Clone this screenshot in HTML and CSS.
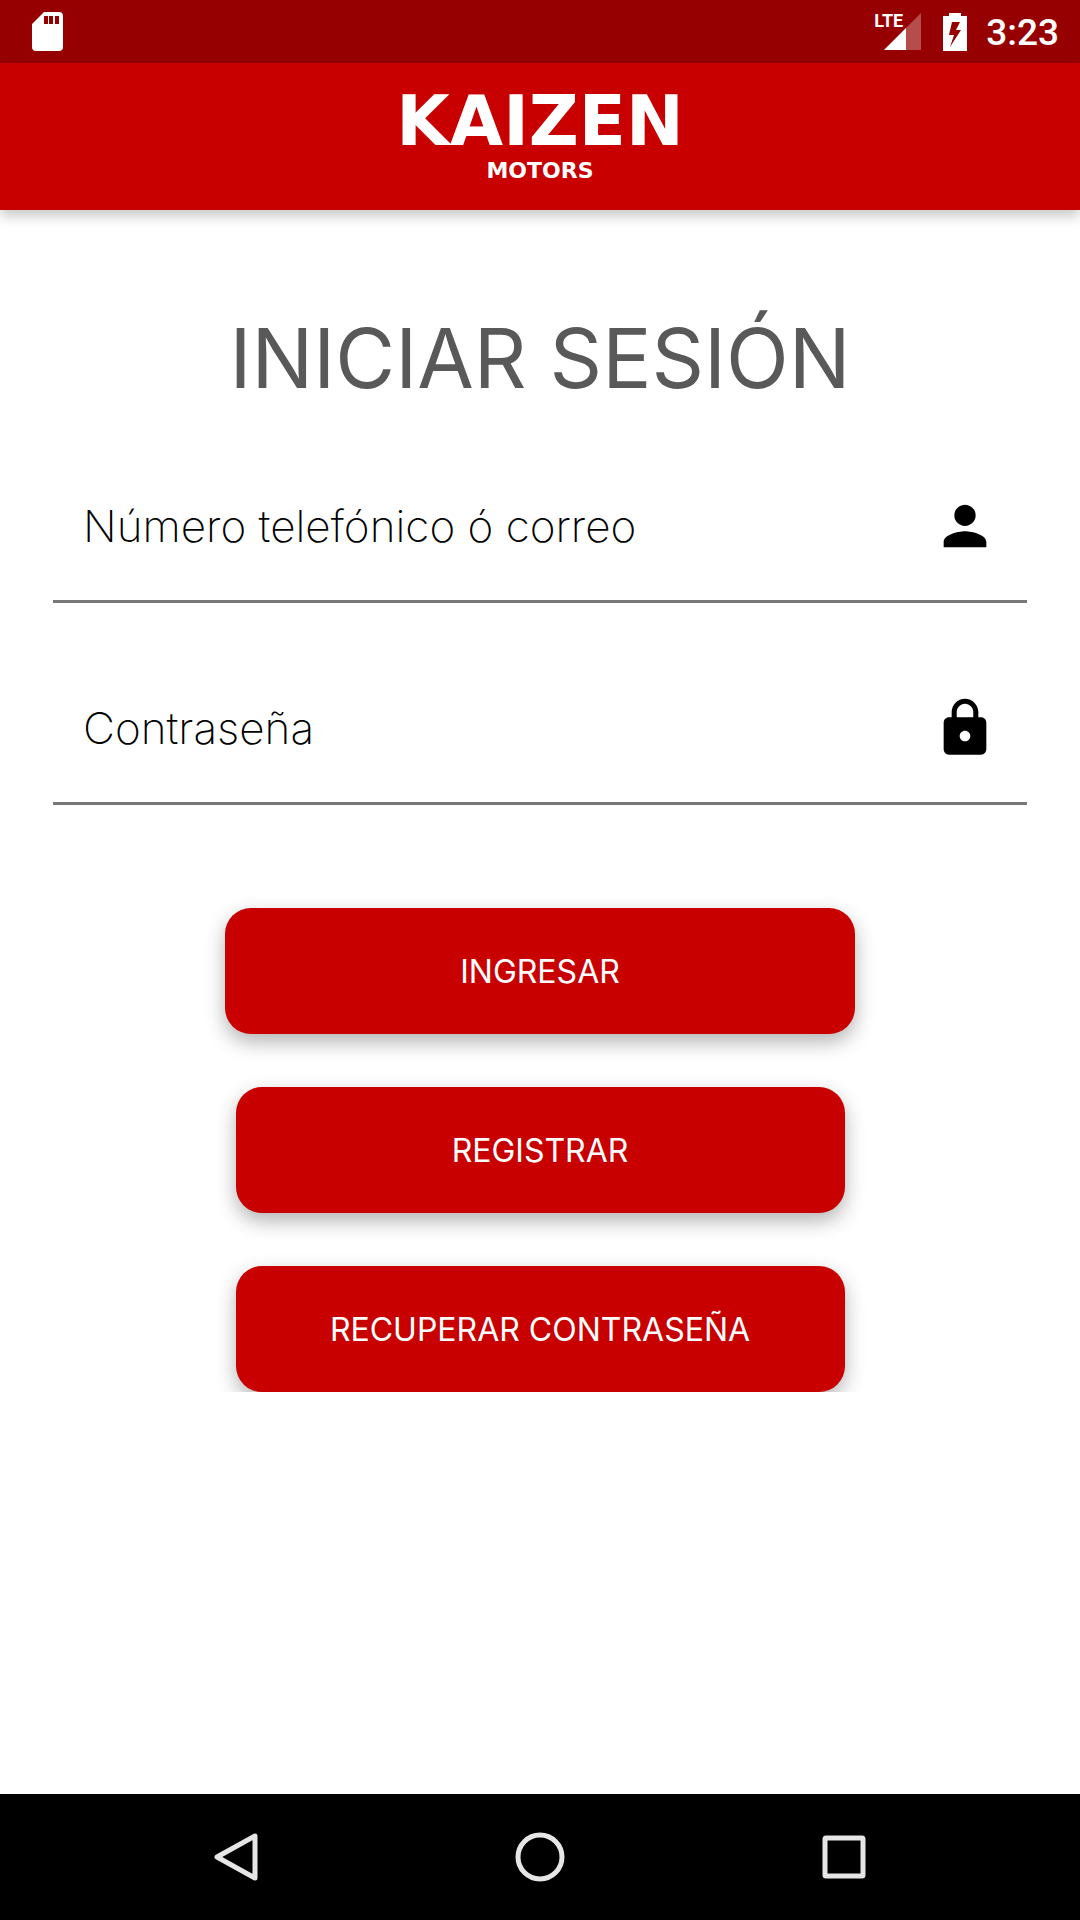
FILE: index.html
```
<!DOCTYPE html>
<html lang="es">
<head>
    <meta charset="UTF-8">
    <meta name="viewport" content="width=device-width, initial-scale=1.0">
    <title>Kaizen Motors - Iniciar sesión</title>
    <link rel="stylesheet" href="styles.css">
</head>
<body>
    <div class="status-bar">
        <svg class="sd-card" viewBox="0 0 31 39" aria-hidden="true">
            <path fill="#fff" fill-rule="evenodd" d="M12 0h15a4 4 0 0 1 4 4v31a4 4 0 0 1-4 4H4a4 4 0 0 1-4-4V12zM12 4v8h4V4zM17 4v8h4V4zM23 4v8h4V4z"/>
        </svg>
        <div class="status-right">
            <div class="network">
                <span class="network-type">LTE</span>
                <svg class="signal" viewBox="0 0 37 37" aria-hidden="true">
                    <path fill="#fff" fill-opacity="0.3" d="M37 0v37H0z"/>
                    <path fill="#fff" d="M22 15v22H0z"/>
                </svg>
            </div>
            <svg class="battery" viewBox="0 0 24 38" aria-hidden="true">
                <path fill="#fff" fill-rule="evenodd" d="M6 0h12v3h6v35H0V3h6zM9 9L6 22h5L7 34l11-17h-5l4-8z"/>
            </svg>
            <span class="clock">3:23</span>
        </div>
    </div>

    <header class="app-bar">
        <div class="brand">KAIZEN</div>
        <div class="brand-sub">MOTORS</div>
    </header>

    <main>
        <form class="login">
            <h1>INICIAR SESIÓN</h1>

            <div class="field">
                <input type="text" id="user" placeholder="Número telefónico ó correo" aria-label="Número telefónico ó correo">
                <label for="user">
                    <svg class="field-icon" viewBox="0 0 24 24" aria-hidden="true">
                        <path d="M12 12c2.21 0 4-1.79 4-4s-1.79-4-4-4-4 1.79-4 4 1.79 4 4 4zm0 2c-2.67 0-8 1.34-8 4v2h16v-2c0-2.66-5.33-4-8-4z"/>
                    </svg>
                </label>
            </div>

            <div class="field">
                <input type="password" id="password" placeholder="Contraseña" aria-label="Contraseña">
                <label for="password">
                    <svg class="field-icon" viewBox="0 0 24 24" aria-hidden="true">
                        <path d="M18 8h-1V6c0-2.76-2.24-5-5-5S7 3.24 7 6v2H6c-1.1 0-2 .9-2 2v10c0 1.1.9 2 2 2h12c1.1 0 2-.9 2-2V10c0-1.1-.9-2-2-2zm-6 9c-1.1 0-2-.9-2-2s.9-2 2-2 2 .9 2 2-.9 2-2 2zm3.1-9H8.9V6c0-1.71 1.39-3.1 3.1-3.1s3.1 1.39 3.1 3.1v2z"/>
                    </svg>
                </label>
            </div>

            <div class="actions">
                <button type="submit" class="btn btn-main">INGRESAR</button>
                <button type="button" class="btn">REGISTRAR</button>
                <button type="button" class="btn">RECUPERAR CONTRASEÑA</button>
            </div>
        </form>
    </main>

    <nav class="nav-bar">
        <button type="button" aria-label="Atrás">
            <svg viewBox="0 0 50 50"><path d="M44 4v42L6 25z"/></svg>
        </button>
        <button type="button" aria-label="Inicio">
            <svg viewBox="0 0 50 50"><circle cx="25" cy="25" r="22"/></svg>
        </button>
        <button type="button" aria-label="Recientes">
            <svg viewBox="0 0 50 50"><rect x="6" y="6" width="38" height="38" rx="1"/></svg>
        </button>
    </nav>
</body>
</html>
```

FILE: styles.css
```
* {
    box-sizing: border-box;
}

body {
    margin: 0;
    min-height: 100vh;
    display: flex;
    flex-direction: column;
    background-color: #fff;
    font-family: Inter, "Open Sans", sans-serif;
}

/* status bar */
.status-bar {
    height: 63px;
    padding: 0 21px 0 32px;
    display: flex;
    align-items: center;
    justify-content: space-between;
    background-color: #960000;
    color: #fff;
    font-family: Roboto, sans-serif;
}

.sd-card {
    width: 31px;
    height: 39px;
}

.status-right {
    display: flex;
    align-items: center;
}

.network {
    display: flex;
    position: relative;
    padding-left: 10px;
    margin-right: 22px;
}

.network-type {
    position: absolute;
    top: 0;
    left: 0;
    font-family: "Liberation Sans Narrow", Roboto, sans-serif;
    font-size: 18px;
    line-height: 16px;
    font-weight: bold;
}

.signal {
    width: 37px;
    height: 37px;
}

.battery {
    width: 24px;
    height: 38px;
    margin-right: 19px;
}

.clock {
    font-size: 37px;
    line-height: 44px;
    font-weight: 500;
    padding-top: 2px;
}

/* app bar */
.app-bar {
    height: 147px;
    display: flex;
    flex-direction: column;
    align-items: center;
    justify-content: center;
    gap: 8px;
    background-color: #c80000;
    box-shadow: 0 6px 12px rgba(0, 0, 0, 0.22);
    color: #fff;
    font-family: "DejaVu Sans", sans-serif;
    font-weight: bold;
}

.brand {
    font-size: 69px;
    line-height: 60px;
}

.brand-sub {
    font-size: 22px;
    line-height: 24px;
}

/* login form */
main {
    flex: 1;
}

.login {
    padding: 0 53px;
    overflow: hidden;
}

/* keeps the bar's shadow above the form */
.app-bar {
    position: relative;
}

h1 {
    margin: 101px 0 48px;
    text-align: center;
    font-size: 82px;
    line-height: 96px;
    font-weight: 400;
    color: #595959;
}

.field {
    height: 148px;
    padding: 0 30px 4px;
    display: flex;
    align-items: center;
    border-bottom: 3px solid #777;
}

.field + .field {
    margin-top: 54px;
}

.field input {
    flex: 1;
    min-width: 0;
    padding: 0;
    border: 0;
    outline: 0;
    background: none;
    font: inherit;
    font-size: 44px;
    font-weight: 200;
    color: #000;
}

.field input::placeholder {
    color: #000;
    opacity: 1;
}

.field-icon {
    display: block;
    width: 64px;
    height: 64px;
}

.actions {
    margin-top: 103px;
    display: flex;
    flex-direction: column;
    align-items: center;
    gap: 53px;
}

.btn {
    width: 609px;
    max-width: 100%;
    height: 126px;
    border: 0;
    border-radius: 26px;
    background-color: #c80000;
    box-shadow: 0 8px 20px rgba(0, 0, 0, 0.3);
    color: #fff;
    font: inherit;
    font-size: 32px;
}

.btn-main {
    width: 630px;
}

/* navigation bar */
.nav-bar {
    height: 126px;
    padding: 0 84px;
    display: grid;
    grid-template-columns: repeat(3, 1fr);
    background-color: #000;
}

.nav-bar button {
    display: flex;
    align-items: center;
    justify-content: center;
    padding: 0;
    border: 0;
    background: none;
}

.nav-bar svg {
    width: 50px;
    height: 50px;
    fill: none;
    stroke: #e6e6e6;
    stroke-width: 5;
    stroke-linejoin: round;
}
```
